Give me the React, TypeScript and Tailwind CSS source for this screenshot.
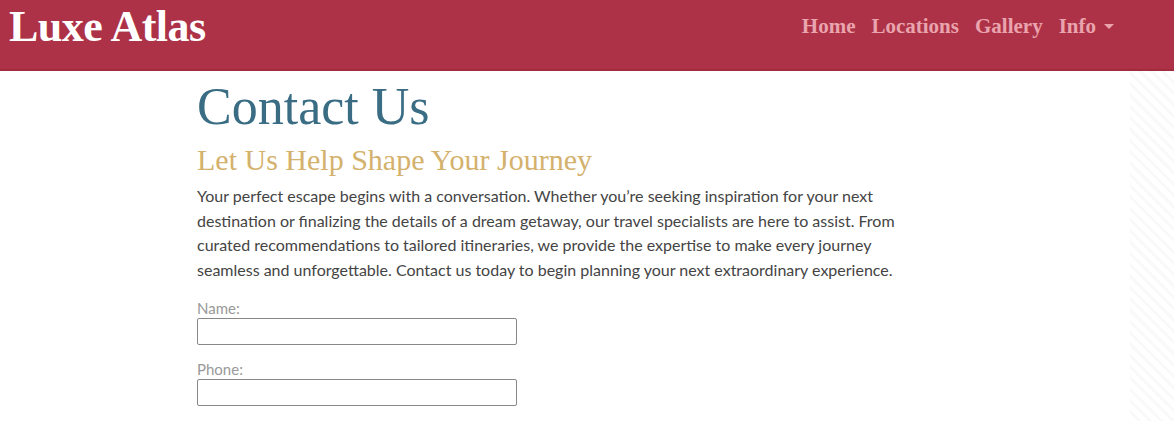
export default function App() {
  const serif = { fontFamily: '"Liberation Serif", "DejaVu Serif", serif' };
  return (
    <div className="min-h-[421px] bg-white">
      <header className="h-[71px] bg-[#ad3247] border-b-2 border-[#a02c40] flex items-start justify-between pl-[9px] pr-[60px]">
        <div className="text-white font-bold text-[44px] leading-none tracking-[-0.5px] mt-[5px]" style={serif}>Luxe Atlas</div>
        <nav className="flex items-center gap-[16px] text-[21px] font-bold text-[#e9a4ae] mt-[11px]" style={serif}>
          <span>Home</span>
          <span>Locations</span>
          <span>Gallery</span>
          <span className="flex items-center gap-[8px]">Info
            <span className="w-0 h-0 border-l-[5px] border-r-[5px] border-t-[5px] border-l-transparent border-r-transparent border-t-[#e9a4ae]" />
          </span>
        </nav>
      </header>
      <div className="flex min-h-[350px]">
        <main className="flex-1 bg-white pl-[197px]">
          <h1 className="text-[#3a6d84] text-[52px] leading-none mt-[10px]" style={serif}>Contact Us</h1>
          <h2 className="text-[#d4b16c] text-[30px] leading-none mt-[12px]" style={serif}>Let Us Help Shape Your Journey</h2>
          <p className="text-[#444] text-[16px] leading-[24.5px] mt-[9px] w-[700px]" style={{ fontFamily: 'Lato, "Open Sans", sans-serif' }}>
            Your perfect escape begins with a conversation. Whether you’re seeking inspiration for your next destination or finalizing the details of a dream getaway, our travel specialists are here to assist. From curated recommendations to tailored itineraries, we provide the expertise to make every journey seamless and unforgettable. Contact us today to begin planning your next extraordinary experience.
          </p>
          <form className="mt-[18px] flex flex-col" style={{ fontFamily: 'Lato, "Open Sans", sans-serif' }}>
            <label className="text-[#999] text-[15px] leading-[19px] -mt-[1px]">Name:</label>
            <input className="w-[320px] h-[27px] border border-[#888] rounded-[2px] bg-white" />
            <label className="text-[#999] text-[15px] leading-[20px] mt-[14px]">Phone:</label>
            <input className="w-[320px] h-[27px] border border-[#888] rounded-[2px] bg-white" />
          </form>
        </main>
        <div className="w-[44px] bg-[repeating-linear-gradient(45deg,transparent_0px,transparent_5px,rgba(0,0,0,0.025)_5px,rgba(0,0,0,0.025)_8px)]" />
      </div>
    </div>
  );
}
